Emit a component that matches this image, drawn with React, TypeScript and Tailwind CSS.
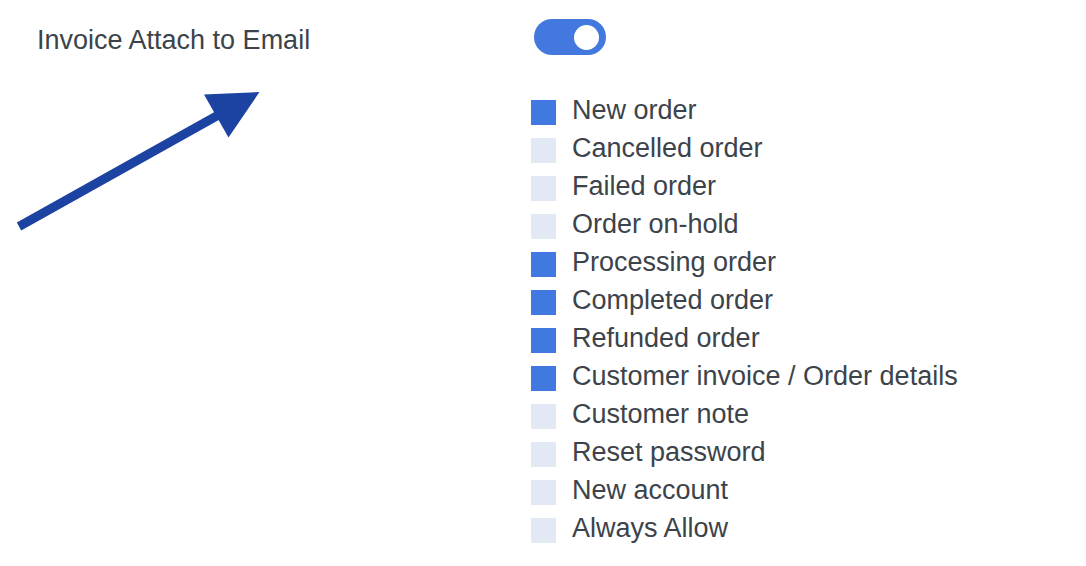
const EMAIL_TYPES: Array<{ label: string; checked: boolean }> = [
  { label: "New order", checked: true },
  { label: "Cancelled order", checked: false },
  { label: "Failed order", checked: false },
  { label: "Order on-hold", checked: false },
  { label: "Processing order", checked: true },
  { label: "Completed order", checked: true },
  { label: "Refunded order", checked: true },
  { label: "Customer invoice / Order details", checked: true },
  { label: "Customer note", checked: false },
  { label: "Reset password", checked: false },
  { label: "New account", checked: false },
  { label: "Always Allow", checked: false },
];

function Toggle({ on }: { on: boolean }) {
  return (
    <div
      className={`flex h-[36px] w-[72px] items-center rounded-full px-[7px] ${
        on ? "justify-end bg-[#4379df]" : "justify-start bg-[#d5dbe5]"
      }`}
    >
      <div className="h-[25px] w-[25px] rounded-full bg-white" />
    </div>
  );
}

function CheckRow({ label, checked }: { label: string; checked: boolean }) {
  return (
    <label className="flex h-[38px] items-center gap-[16px]">
      <span
        className={`block h-[25px] w-[25px] shrink-0 ${
          checked ? "bg-[#4179e0]" : "bg-[#e3e9f4]"
        }`}
      />
      <span className="pb-[4px] leading-[34px]">{label}</span>
    </label>
  );
}

function Arrow() {
  return (
    <svg
      className="pointer-events-none absolute left-0 top-0"
      width="300"
      height="260"
      viewBox="0 0 300 260"
      aria-hidden="true"
    >
      <line
        x1="19"
        y1="226.5"
        x2="222"
        y2="113"
        stroke="#1c42a2"
        strokeWidth="9"
      />
      <polygon points="204,94.5 259.5,92 228.5,137.5" fill="#1c42a2" />
    </svg>
  );
}

export default function App() {
  return (
    <div
      className="relative h-[566px] w-[1086px] overflow-hidden bg-white text-[27px] text-[#3c434a]"
      style={{ fontFamily: '"Liberation Sans", Arial, sans-serif' }}
    >
      <div className="flex items-start pl-[37px] pt-[19px]">
        <div className="mt-[2px] w-[494px] leading-[38px]">
          Invoice Attach to Email
        </div>
        <div className="flex flex-col">
          <div className="ml-[3px]">
            <Toggle on />
          </div>
          <div className="mt-[38px] flex flex-col">
            {EMAIL_TYPES.map((item) => (
              <CheckRow key={item.label} label={item.label} checked={item.checked} />
            ))}
          </div>
        </div>
      </div>
      <Arrow />
    </div>
  );
}
